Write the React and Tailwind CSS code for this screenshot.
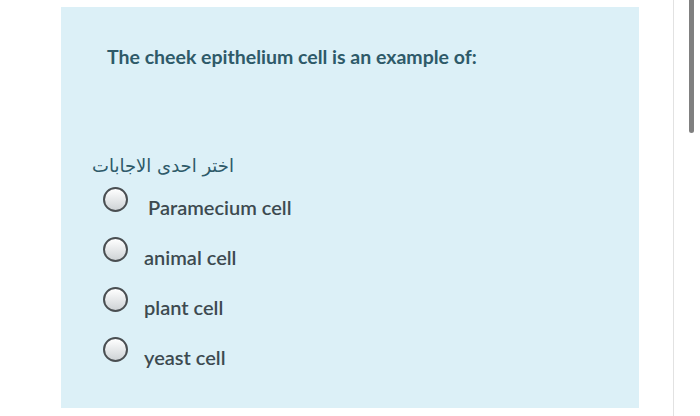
export default function App() {
  const options = [
    { label: "Paramecium cell", pad: "pl-[4px]" },
    { label: "animal cell", pad: "" },
    { label: "plant cell", pad: "" },
    { label: "yeast cell", pad: "" },
  ];

  return (
    <div className="relative w-[700px] h-[416px] bg-white overflow-hidden font-['Lato',sans-serif]">
      <div className="ml-[61px] pt-[7px] w-[578px]">
        <div className="h-[401px] bg-[#dcf0f7] pl-[46px] pt-[35px]">
          <h1 className="text-[19.5px] leading-[30px] font-bold text-[#2e5a69]">
            The cheek epithelium cell is an example of:
          </h1>
          <p
            dir="rtl"
            className="mt-[81px] -ml-[15px] w-fit text-[18px] leading-[26px] font-medium text-[#2e5a69] font-['DejaVu_Sans',sans-serif]"
          >
            اختر احدى الاجابات
          </p>
          <div className="mt-[8px] -ml-[4px] flex flex-col gap-[24px]">
            {options.map((o) => (
              <label key={o.label} className="flex items-start gap-[16px] h-[26px]">
                <span className="w-[25px] h-[25px] rounded-full border-2 border-[#4a4f52] bg-gradient-to-b from-white to-[#cfd3d6] shrink-0" />
                <span
                  className={`mt-[6px] text-[20px] leading-[28px] font-semibold text-[#3d4a50] ${o.pad}`}
                >
                  {o.label}
                </span>
              </label>
            ))}
          </div>
        </div>
      </div>
      <div className="absolute left-[673px] top-0 w-px h-[416px] bg-[#e2e2e2]" />
      <div className="absolute left-[689px] top-0 w-[5px] h-[133px] rounded-b-full bg-[#808080]" />
    </div>
  );
}
